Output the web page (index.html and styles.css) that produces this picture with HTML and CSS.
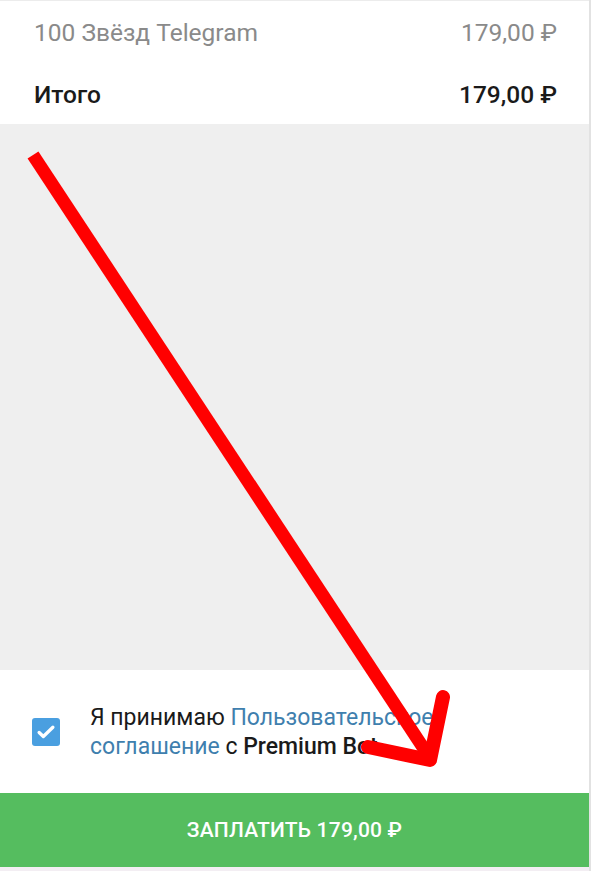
FILE: index.html
```html
<!DOCTYPE html>
<html lang="ru">
<head>
<meta charset="utf-8">
<link rel="stylesheet" href="styles.css">
</head>
<body>
<div class="app">
  <section class="summary">
    <div class="row item">
      <span>100 Звёзд Telegram</span>
      <span>179,00 ₽</span>
    </div>
    <div class="row total">
      <span>Итого</span>
      <span>179,00 ₽</span>
    </div>
  </section>
  <div class="spacer"></div>
  <section class="terms">
    <span class="check">
      <svg viewBox="0 0 24 24" width="22" height="22"><path d="M4.5 12.5l4.6 4.4L19.5 6.8" fill="none" stroke="#fff" stroke-width="3.6" stroke-linecap="round" stroke-linejoin="round"/></svg>
    </span>
    <p class="terms-text">Я принимаю <a class="link">Пользовательское соглашение</a> с <b>Premium Bot</b></p>
  </section>
  <button class="pay">ЗАПЛАТИТЬ 179,00 ₽</button>
  <div class="bottom-strip"></div>
  <svg class="arrow" viewBox="0 0 591 871" width="591" height="871">
    <path d="M33 155 L430 758" fill="none" stroke="#ff0000" stroke-width="13" stroke-linecap="butt"/>
    <path d="M443 697 L430 760 L368 747" fill="none" stroke="#ff0000" stroke-width="14" stroke-linecap="round" stroke-linejoin="round"/>
  </svg>
</div>
</body>
</html>
```

FILE: styles.css
```css
* { box-sizing: border-box; }
html, body { margin: 0; padding: 0; }
body {
  font-family: Roboto, "Noto Sans", "Liberation Sans", sans-serif;
  background: #efefef;
}
.app {
  position: relative;
  width: 591px;
  height: 871px;
  display: flex;
  flex-direction: column;
  background: #efefef;
  border-right: 2px solid #e2e2e2;
  overflow: hidden;
}
.summary {
  background: #fff;
  border-top: 1px solid #ececec;
  height: 124px;
  padding: 0 32px 0 34px;
  display: flex;
  flex-direction: column;
}
.row {
  display: flex;
  justify-content: space-between;
  align-items: center;
}
.item {
  height: 64px;
  font-size: 24.5px;
  color: #8a8a8a;
}
.total {
  height: 60px;
  font-size: 24.5px;
  font-weight: 500;
  color: #1a1a1a;
}
.spacer { flex: 1; }
.terms {
  background: #fff;
  height: 123px;
  display: flex;
  align-items: center;
  padding: 0 20px 0 32px;
  gap: 30px;
}
.check {
  width: 28px;
  height: 28px;
  border-radius: 3px;
  background: #4a9fe0;
  display: flex;
  align-items: center;
  justify-content: center;
  flex-shrink: 0;
}
.terms-text {
  margin: 0;
  font-size: 23px;
  line-height: 29px;
  color: #1a1a1a;
  width: 400px;
}
.link { color: #3f7fae; }
.terms-text b { font-weight: 500; }
.pay {
  height: 74px;
  border: 0;
  margin: 0;
  background: #55bd5f;
  color: #fff;
  font-family: inherit;
  font-size: 21px;
  font-weight: 500;
  letter-spacing: 0.2px;
  width: 100%;
}
.bottom-strip {
  height: 4px;
  background: #f3eef3;
}
.arrow {
  position: absolute;
  left: 0;
  top: 0;
  pointer-events: none;
}
```
